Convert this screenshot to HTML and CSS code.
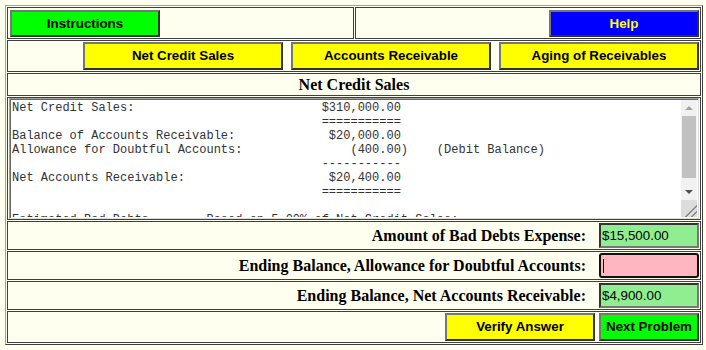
FILE: index.html
```html
<!DOCTYPE html>
<html lang="en">
<head>
	<meta charset="UTF-8">
	<title>Net Credit Sales</title>
<link rel="stylesheet" href="styles.css">
</head>
<body>
	<div class="frame">
		<div class="row">
			<div class="cell half top"><button class="btn green wide">Instructions</button></div>
			<div class="cell half top end"><button class="btn blue wide">Help</button></div>
		</div>
		<div class="cell tabs">
			<button class="btn yellow tab">Net Credit Sales</button>
			<button class="btn yellow tab">Accounts Receivable</button>
			<button class="btn yellow tab">Aging of Receivables</button>
		</div>
		<div class="cell title">Net Credit Sales</div>
		<div class="cell sheet">
			<div class="box">
<pre class="text">Net Credit Sales:                          $310,000.00
                                           ===========
Balance of Accounts Receivable:             $20,000.00
Allowance for Doubtful Accounts:               (400.00)    (Debit Balance)
                                           -----------
Net Accounts Receivable:                    $20,400.00
                                           ===========

Estimated Bad Debts        Based on 5.00% of Net Credit Sales:
</pre>
				<div class="scroll">
					<div class="arrow up"><span></span></div>
					<div class="track"><div class="thumb"></div></div>
					<div class="arrow down"><span></span></div>
					<div class="corner"></div>
				</div>
			</div>
		</div>
		<div class="cell field">
			<label>Amount of Bad Debts Expense:</label>
			<input type="text" class="answer ok" value="$15,500.00">
		</div>
		<div class="cell field">
			<label>Ending Balance, Allowance for Doubtful Accounts:</label>
			<input type="text" class="answer wrong" value="">
		</div>
		<div class="cell field">
			<label>Ending Balance, Net Accounts Receivable:</label>
			<input type="text" class="answer ok" value="$4,900.00">
		</div>
		<div class="cell actions">
			<button class="btn yellow verify">Verify Answer</button>
			<button class="btn green next">Next Problem</button>
		</div>
	</div>
</body>
</html>
```

FILE: styles.css
```css
*{ box-sizing: border-box; }
body{ margin: 0; background: #fffff0; font-family: "Liberation Sans", Arial, sans-serif; }

.frame{ width: 698px; margin: 5px; padding: 1px; display: flex; flex-direction: column; gap: 1px;
	border: 1px solid; border-color: #a0a0a0 #404040 #404040 #a0a0a0; }
.row{ display: flex; gap: 1px; }
.cell{ display: flex; align-items: center; border: 1px solid #3f3f3f; background: #fffff0; }

/* buttons */
.btn{ height: 27px; padding: 0 0 1px; font: bold 13.333px "Liberation Sans", Arial, sans-serif; color: #000;
	border: 2px solid; border-color: #767676 #303030 #303030 #767676; }
.green{ background: #00ff00; }
.yellow{ background: #ffff00; }
.blue{ background: #0000ff; color: #ffff00; }

.half{ flex: 1; height: 32px; align-items: flex-start; padding: 2px 1px 0 2px; }
.end{ justify-content: flex-end; }
.wide{ width: 150px; }

.tabs{ height: 32px; align-items: flex-start; justify-content: flex-end; gap: 8px; padding: 1px 1px 0 0; }
.tab{ width: 200px; height: 28px; }

.title{ height: 23px; justify-content: center; font: bold 16px "Liberation Serif", "Times New Roman", serif; }

/* text area */
.sheet{ height: 123px; align-items: stretch; padding: 0 1px; }
.box{ flex: 1; display: flex; padding: 1px; background: #fff;
	border: 1px solid; border-color: #a0a0a0 #dcdcdc #dcdcdc #a0a0a0; box-shadow: inset 1px 1px 0 #696969; }
.text{ flex: 1; margin: 0; padding: 1px 0 0 1px; overflow: hidden; white-space: pre;
	font: 12px/14px "Liberation Mono", "Courier New", monospace; color: #333; }
.scroll{ width: 16px; display: flex; flex-direction: column; background: #f1f1f1; }
.arrow{ height: 16px; display: flex; align-items: center; justify-content: center; }
.arrow span{ width: 0; height: 0; border-left: 4px solid transparent; border-right: 4px solid transparent; }
.up span{ border-bottom: 4px solid #a3a3a3; }
.down span{ border-top: 4px solid #505050; }
.track{ flex: 1; padding: 0 1px; }
.thumb{ height: 62px; background: #c1c1c1; }
.corner{ height: 17px; background: #dcdcdc;
	background-image: linear-gradient(135deg, transparent 62%, #8a8a8a 62%, #8a8a8a 67%, transparent 67%, transparent 80%, #8a8a8a 80%, #8a8a8a 85%, transparent 85%); }

/* answer rows */
.field{ height: 29px; justify-content: flex-end; gap: 13px; padding-right: 1px; }
.field label{ font: bold 16px "Liberation Serif", "Times New Roman", serif; }
.answer{ width: 100px; height: 25px; padding: 0 1px; font: 13.333px "Liberation Sans", Arial, sans-serif; color: #000;
	border: 2px solid; border-color: #333 #777 #777 #333; outline: none; }
.ok{ background: #90ee90; }
/* focused field, caret drawn as a thin bar */
.wrong{ border-color: #111; border-radius: 3px;
	background: linear-gradient(#000, #000) no-repeat 2px 4px / 1px 14px, #ffb6c1; }

.actions{ height: 32px; align-items: flex-start; justify-content: flex-end; gap: 4px; padding: 1px 1px 0 0; }
.verify{ width: 150px; height: 28px; }
.next{ width: 100px; height: 28px; }
```
